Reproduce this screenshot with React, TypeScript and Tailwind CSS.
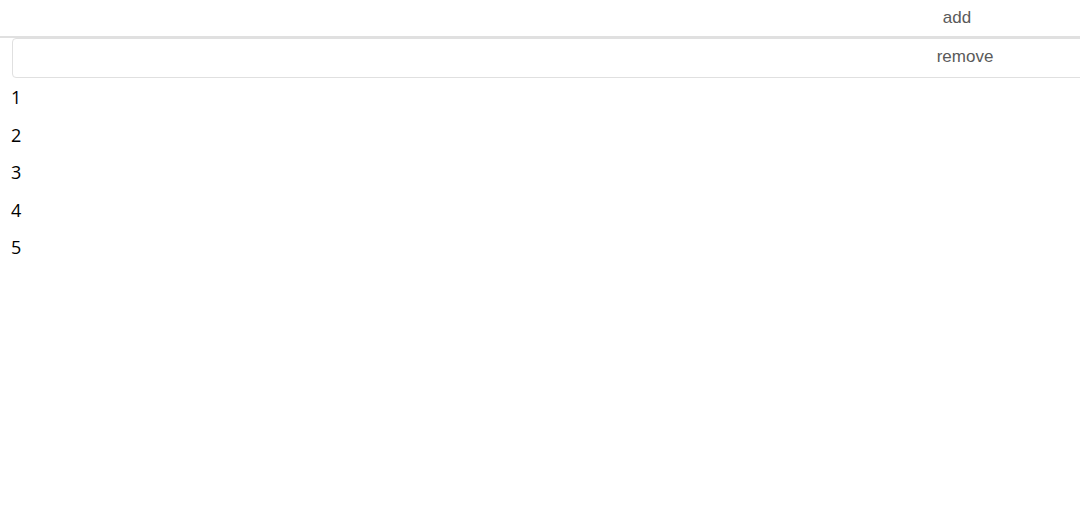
export default function App() {
  const items = [1, 2, 3, 4, 5];
  return (
    <div className="w-screen h-screen overflow-hidden bg-white">
      <div className="w-[1914px] h-[38px] border-b-2 border-[#e0e0e0] flex items-center justify-center text-[17px] text-[#5a5a5a] font-['Liberation_Sans',Arial,sans-serif] pb-[0px]">
        add
      </div>
      <div className="ml-[12px] w-[1906px] h-[40px] border border-[#e0e0e0] rounded-l flex items-center justify-center text-[17px] text-[#5a5a5a] font-['Liberation_Sans',Arial,sans-serif] pb-[2px]">
        remove
      </div>
      <ul className="font-['Open_Sans','Noto_Sans',sans-serif] text-[18px] text-black pt-[1px]">
        {items.map((n) => (
          <li key={n} className="h-[37.5px] leading-[37.5px] pl-[11px]">
            {n}
          </li>
        ))}
      </ul>
    </div>
  );
}
